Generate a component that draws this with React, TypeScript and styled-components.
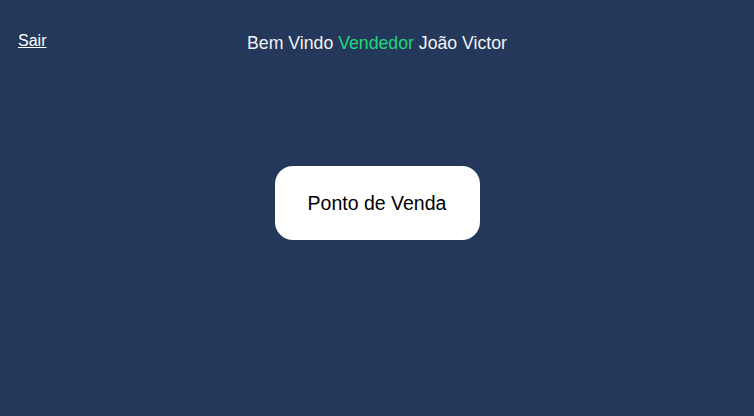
import React from 'react'
import styled, { createGlobalStyle } from 'styled-components'

const GlobalStyle = createGlobalStyle`
  html, body {
    margin: 0;
    padding: 0;
    background: #24385b;
  }
  body {
    font-family: "Liberation Sans", Arial, sans-serif;
  }
`;

const Page = styled.div`
  width: 100%;
  height: 416px;
  background: #24385b;
  display: flex;
  flex-direction: column;
`;

const Header = styled.header`
  position: relative;
  display: flex;
  align-items: center;
  justify-content: center;
  height: 40px;
  padding-top: 23px;
`;

const Logout = styled.a`
  position: absolute;
  left: 18px;
  top: 32px;
  color: #ffffff;
  font-size: 16px;
  text-decoration: underline;
  cursor: pointer;
`;

const Welcome = styled.h1`
  margin: 0;
  font-size: 17.7px;
  font-weight: 400;
  color: #f2f2f2;
`;

const Role = styled.span`
  color: #20d67b;
`;

const Main = styled.main`
  display: flex;
  justify-content: center;
  padding-top: 103px;
`;

const MenuButton = styled.button`
  width: 205px;
  height: 74px;
  border: none;
  border-radius: 18px;
  background: #ffffff;
  color: #000000;
  font-family: "Liberation Sans", Arial, sans-serif;
  font-size: 19.5px;
  cursor: pointer;
`;

export default function App() {
  return (
    <>
      <GlobalStyle />
      <Page>
        <Header>
          <Logout>Sair</Logout>
          <Welcome>
            Bem Vindo <Role>Vendedor</Role> João Victor
          </Welcome>
        </Header>
        <Main>
          <MenuButton>Ponto de Venda</MenuButton>
        </Main>
      </Page>
    </>
  )
}
